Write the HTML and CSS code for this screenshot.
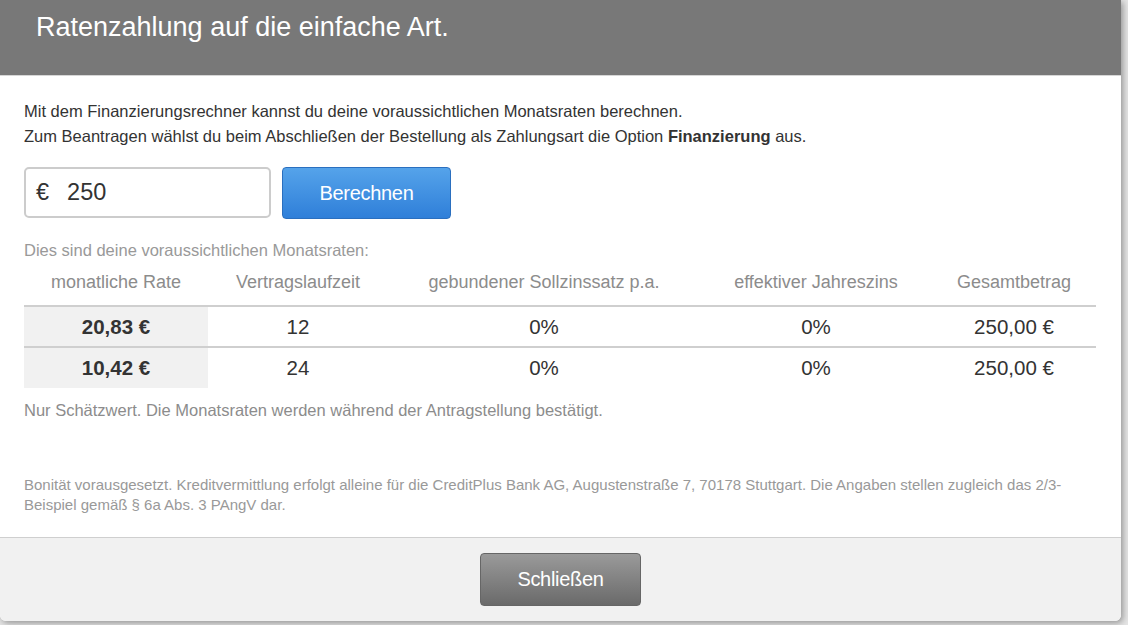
FILE: index.html
```
<!DOCTYPE html>
<html lang="de">

<head>
    <meta charset="UTF-8">
    <meta name="viewport" content="width=device-width, initial-scale=1.0">
    <title>Ratenzahlung</title>
    <link rel="stylesheet" href="styles.css">
</head>

<body>
    <div class="modal">
        <div class="modal-header">
            <h2>Ratenzahlung auf die einfache Art.</h2>
        </div>
        <div class="modal-body">
            <p class="intro">
                Mit dem Finanzierungsrechner kannst du deine voraussichtlichen Monatsraten berechnen.<br>
                Zum Beantragen wählst du beim Abschließen der Bestellung als Zahlungsart die Option <b>Finanzierung</b> aus.
            </p>
            <div class="calc">
                <div class="amount">
                    <span class="currency">€</span>
                    <span class="value">250</span>
                </div>
                <button class="btn-calc">Berechnen</button>
            </div>
            <p class="hint">Dies sind deine voraussichtlichen Monatsraten:</p>
            <table class="rates">
                <thead>
                    <tr>
                        <th class="c1">monatliche Rate</th>
                        <th class="c2">Vertragslaufzeit</th>
                        <th class="c3">gebundener Sollzinssatz p.a.</th>
                        <th class="c4">effektiver Jahreszins</th>
                        <th class="c5">Gesamtbetrag</th>
                    </tr>
                </thead>
                <tbody>
                    <tr>
                        <td class="rate">20,83 €</td>
                        <td>12</td>
                        <td>0%</td>
                        <td>0%</td>
                        <td>250,00 €</td>
                    </tr>
                    <tr>
                        <td class="rate">10,42 €</td>
                        <td>24</td>
                        <td>0%</td>
                        <td>0%</td>
                        <td>250,00 €</td>
                    </tr>
                </tbody>
            </table>
            <p class="hint note">Nur Schätzwert. Die Monatsraten werden während der Antragstellung bestätigt.</p>
            <p class="legal">Bonität vorausgesetzt. Kreditvermittlung erfolgt alleine für die CreditPlus Bank AG, Augustenstraße 7, 70178 Stuttgart. Die Angaben stellen zugleich das 2/3-Beispiel gemäß § 6a Abs. 3 PAngV dar.</p>
        </div>
        <div class="modal-footer">
            <button class="btn-close">Schließen</button>
        </div>
    </div>
</body>

</html>
```

FILE: styles.css
```
* {
    box-sizing: border-box;
    margin: 0;
    padding: 0;
}

body {
    font-family: Arial, "Liberation Sans", sans-serif;
    background-color: #e4e4e4;
    width: 1128px;
    height: 625px;
    overflow: hidden;
}

.modal {
    width: 1121px;
    background-color: #fff;
    border-radius: 0 0 6px 6px;
    box-shadow: 2px 2px 6px rgba(0, 0, 0, 0.35);
    overflow: hidden;
}

.modal-header {
    background-color: #787878;
    height: 76px;
    padding: 10px 36px;
    border-bottom: 1px solid #d6d6d6;
}

.modal-header h2 {
    color: #fff;
    font-weight: normal;
    font-size: 27px;
    line-height: 34px;
}

.modal-body {
    padding: 23px 24px 0 24px;
    height: 461px;
}

.intro {
    color: #333;
    font-size: 16.5px;
    line-height: 25px;
}

.calc {
    display: flex;
    gap: 11px;
    margin-top: 18px;
}

.amount {
    width: 247px;
    height: 51px;
    border: 2px solid #ccc;
    border-radius: 5px;
    display: flex;
    align-items: center;
    padding-left: 10px;
    font-size: 23.5px;
    color: #333;
}

.amount .value {
    margin-left: 18px;
}

.btn-calc {
    width: 169px;
    height: 52px;
    border: 1px solid #2a6fbf;
    border-radius: 4px;
    background: linear-gradient(to bottom, #55a3ea 0%, #2f7fd9 100%);
    color: #fff;
    font-family: inherit;
    font-size: 20px;
    letter-spacing: -0.3px;
}

.hint {
    color: #999;
    font-size: 16.5px;
    line-height: 20px;
    margin-top: 21px;
}

.rates {
    width: 1072px;
    border-collapse: collapse;
    margin-top: 1px;
    table-layout: fixed;
}

.rates th {
    color: #8c8c8c;
    font-weight: normal;
    font-size: 18px;
    height: 45px;
    border-bottom: 2px solid #cfcfcf;
    padding-bottom: 2px;
}

.rates .c1 { width: 184px; }
.rates .c2 { width: 180px; }
.rates .c3 { width: 312px; }
.rates .c4 { width: 232px; }
.rates .c5 { width: 164px; }

.rates td {
    text-align: center;
    color: #333;
    font-size: 20.5px;
    height: 41px;
}

.rates tbody tr:first-child td {
    border-bottom: 2px solid #cfcfcf;
}

.rates td.rate {
    background-color: #f1f1f1;
    font-weight: bold;
}

.note {
    color: #8c8c8c;
    margin-top: 12px;
}

.legal {
    color: #999;
    font-size: 15px;
    line-height: 20px;
    margin-top: 55px;
}

.modal-footer {
    background-color: #f1f1f1;
    border-top: 1px solid #cfcfcf;
    height: 84px;
    display: flex;
    justify-content: center;
    padding-top: 15px;
}

.btn-close {
    width: 161px;
    height: 53px;
    border: 1px solid #666;
    border-radius: 4px;
    background: linear-gradient(to bottom, #9a9a9a 0%, #6a6a6a 100%);
    color: #fff;
    font-family: inherit;
    font-size: 20px;
    letter-spacing: -0.3px;
}
```
